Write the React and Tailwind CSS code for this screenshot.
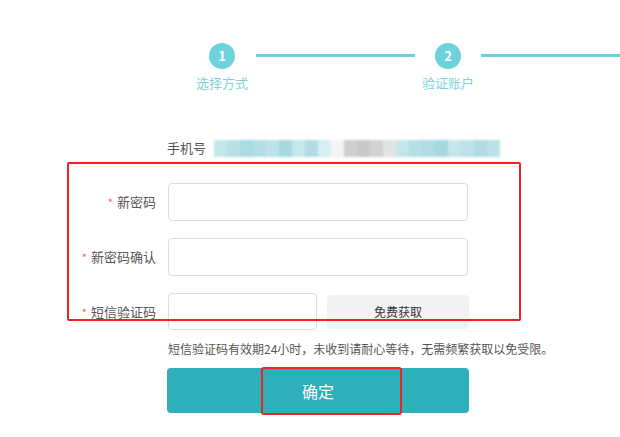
import React from 'react';

const font = { fontFamily: '"Microsoft YaHei", "Noto Sans CJK SC", "Noto Sans", sans-serif' };

const blurCells = [
  '#c3e6ea', '#b7e1e6', '#a9dbe1', '#b3dfe4', '#bde3e8', '#a6d9df', '#c6e7eb', '#b0dde3', '#d5eef0',
  '#f4f4f4', '#cfcfcf', '#c8c8c8', '#d2d2d2', '#e3e3e3', '#c2e5e9', '#b6e0e5', '#aedce2', '#a7d8de',
  '#c5e6ea', '#bce3e7', '#afdde3', '#b9e2e6',
];

function Step({ n, label }) {
  return (
    <div className="w-[64px] flex flex-col items-center">
      <div className="w-[26px] h-[26px] rounded-full bg-[#6dd2dc] text-white text-[13px] font-bold flex items-center justify-center">
        {n}
      </div>
      <div className="mt-[5px] text-[13px] leading-[18px] text-[#7fd3dc]">{label}</div>
    </div>
  );
}

function Label({ text }) {
  return (
    <div className="w-[156px] shrink-0 text-right text-[13px] text-[#555]">
      <span className="text-[#e66] text-[11px] mr-[4px]">*</span>
      {text}
    </div>
  );
}

export default function App() {
  return (
    <div className="relative w-[620px] h-[437px] bg-white overflow-hidden" style={font}>
      {/* steps */}
      <div className="flex items-start pt-[43px] pl-[190px]">
        <Step n="1" label="选择方式" />
        <div className="mt-[11px] ml-[2px] w-[159px] h-[3px] bg-[#6dd2dc]" />
        <div className="ml-[1px]">
          <Step n="2" label="验证账户" />
        </div>
        <div className="mt-[11px] ml-[1px] flex-1 h-[3px] bg-[#6dd2dc]" />
      </div>

      {/* phone */}
      <div className="mt-[46px] ml-[167px] flex items-center h-[20px]">
        <span className="text-[13px] text-[#555]">手机号</span>
        <div className="ml-[8px] flex h-[17px] blur-[1px]">
          {blurCells.map((c, i) => (
            <div key={i} className="w-[13px] h-full" style={{ backgroundColor: c }} />
          ))}
        </div>
      </div>

      {/* form */}
      <div className="mt-[25px] flex flex-col gap-[17px]">
        <div className="flex items-center gap-[12px]">
          <Label text="新密码" />
          <input className="w-[300px] h-[38px] border border-[#ddd] rounded-[4px] bg-white outline-none" />
        </div>
        <div className="flex items-center gap-[12px]">
          <Label text="新密码确认" />
          <input className="w-[300px] h-[38px] border border-[#ddd] rounded-[4px] bg-white outline-none" />
        </div>
        <div className="flex items-center gap-[12px]">
          <Label text="短信验证码" />
          <input className="w-[149px] h-[37px] border border-[#ddd] rounded-[4px] bg-white outline-none" />
          <button className="ml-[-2px] w-[142px] h-[34px] rounded-[4px] bg-[#f2f2f2] text-[12px] text-[#333]">
            免费获取
          </button>
        </div>
      </div>

      <div className="mt-[11px] ml-[168px] text-[12px] leading-[16px] text-[#555]">
        短信验证码有效期24小时，未收到请耐心等待，无需频繁获取以免受限。
      </div>

      <button className="mt-[11px] ml-[167px] w-[302px] h-[45px] rounded-[4px] bg-[#2fafba] text-white text-[16px] flex items-center justify-center">
        确定
      </button>

      {/* annotations */}
      <div className="absolute left-[67px] top-[162px] w-[454px] h-[159px] border-2 border-[#f22222] rounded-[2px] pointer-events-none" />
      <div className="absolute left-[261px] top-[367px] w-[141px] h-[48px] border-2 border-[#f22222] rounded-[3px] pointer-events-none" />
    </div>
  );
}
